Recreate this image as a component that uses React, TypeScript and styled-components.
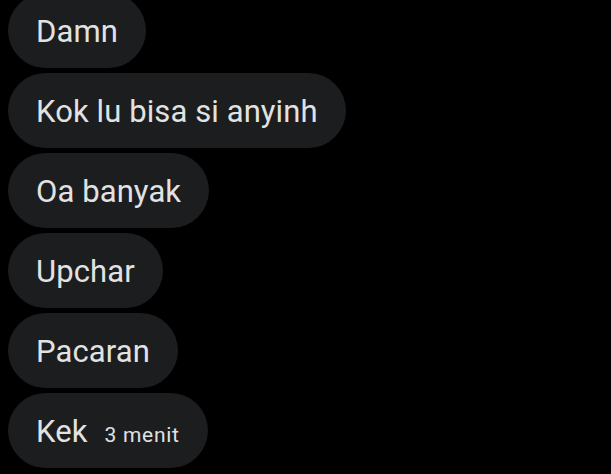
import React from "react";
import styled, { createGlobalStyle } from "styled-components";

const Global = createGlobalStyle`
  html, body { margin: 0; padding: 0; background: #000; }
  body { font-family: Roboto, "Noto Sans", sans-serif; -webkit-font-smoothing: antialiased; }
`;

const List = styled.div`
  display: flex;
  flex-direction: column;
  align-items: flex-start;
  gap: 5px;
  padding-left: 8px;
  margin-top: -7px;
`;

const Bubble = styled.div`
  display: flex;
  align-items: baseline;
  height: 75px;
  box-sizing: border-box;
  padding: 0 28px 0 28px;
  border-radius: 38px;
  background: #1c1d1f;
  color: #e2e2e2;
  font-size: 31px;
  letter-spacing: 0.1px;
  line-height: 78px;
  white-space: nowrap;
`;

const Time = styled.span`
  font-size: 21px;
  letter-spacing: 0.7px;
  margin-left: 17px;
  color: #e2e2e2;
`;

const messages = ["Damn", "Kok lu bisa si anyinh", "Oa banyak", "Upchar", "Pacaran"];

export default function App() {
  return (
    <>
      <Global />
      <List>
        {messages.map((m) => (
          <Bubble key={m}>{m}</Bubble>
        ))}
        <Bubble>
          Kek<Time>3 menit</Time>
        </Bubble>
      </List>
    </>
  );
}
